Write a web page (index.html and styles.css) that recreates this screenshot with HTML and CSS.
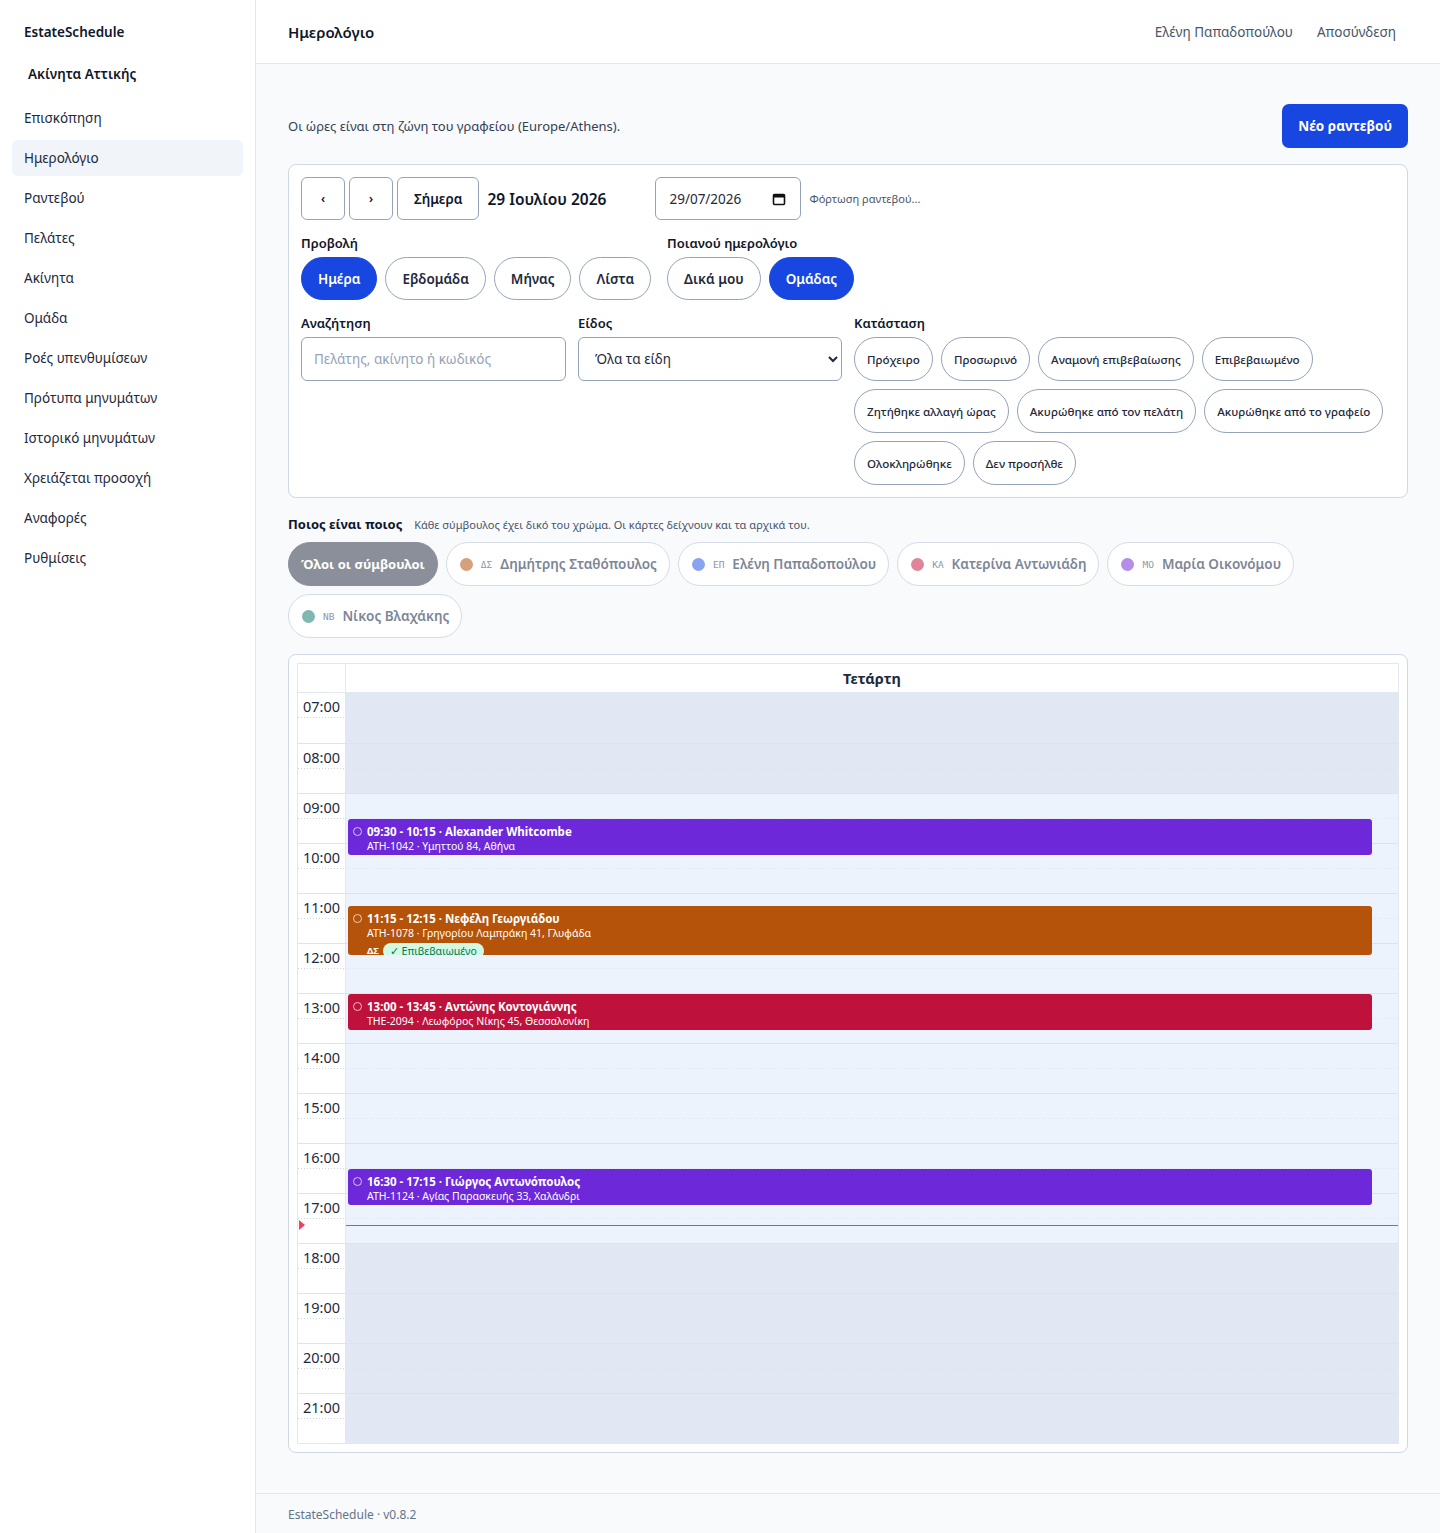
FILE: index.html
```html
<!DOCTYPE html>
<html lang="el">
<head>
  <meta charset="UTF-8">
  <meta name="viewport" content="width=device-width, initial-scale=1.0">
  <title>Ημερολόγιο · EstateSchedule</title>
  <link rel="stylesheet" href="styles.css">
</head>
<body>
  <aside class="sidebar">
    <div class="brand">EstateSchedule</div>
    <div class="agency">Ακίνητα Αττικής</div>
    <nav class="nav">
      <a class="nav-item">Επισκόπηση</a>
      <a class="nav-item active">Ημερολόγιο</a>
      <a class="nav-item">Ραντεβού</a>
      <a class="nav-item">Πελάτες</a>
      <a class="nav-item">Ακίνητα</a>
      <a class="nav-item">Ομάδα</a>
      <a class="nav-item">Ροές υπενθυμίσεων</a>
      <a class="nav-item">Πρότυπα μηνυμάτων</a>
      <a class="nav-item">Ιστορικό μηνυμάτων</a>
      <a class="nav-item">Χρειάζεται προσοχή</a>
      <a class="nav-item">Αναφορές</a>
      <a class="nav-item">Ρυθμίσεις</a>
    </nav>
  </aside>

  <div class="page">
    <header class="topbar">
      <h1 class="page-title">Ημερολόγιο</h1>
      <div class="user-links">
        <a>Ελένη Παπαδοπούλου</a>
        <a>Αποσύνδεση</a>
      </div>
    </header>

    <main class="main">
      <div class="intro">
        <p class="tz-note">Οι ώρες είναι στη ζώνη του γραφείου (Europe/Athens).</p>
        <button class="btn-primary">Νέο ραντεβού</button>
      </div>

      <section class="card filters">
        <div class="nav-row">
          <button class="btn-box arrow">‹</button>
          <button class="btn-box arrow">›</button>
          <button class="btn-box">Σήμερα</button>
          <span class="date-title">29 Ιουλίου 2026</span>
          <div class="date-input">
            <span>29/07/2026</span>
            <svg width="14" height="14" viewBox="0 0 14 14"><rect x="1.5" y="2.5" width="11" height="10" rx="1" fill="none" stroke="#111" stroke-width="1.6"/><rect x="1.5" y="2.5" width="11" height="3" fill="#111"/></svg>
          </div>
          <span class="loading">Φόρτωση ραντεβού...</span>
        </div>

        <div class="view-row">
          <div class="group">
            <div class="label">Προβολή</div>
            <div class="pills">
              <button class="pill active">Ημέρα</button>
              <button class="pill">Εβδομάδα</button>
              <button class="pill">Μήνας</button>
              <button class="pill">Λίστα</button>
            </div>
          </div>
          <div class="group">
            <div class="label">Ποιανού ημερολόγιο</div>
            <div class="pills">
              <button class="pill">Δικά μου</button>
              <button class="pill active">Ομάδας</button>
            </div>
          </div>
        </div>

        <div class="filter-grid">
          <div>
            <div class="label">Αναζήτηση</div>
            <input class="field" type="text" placeholder="Πελάτης, ακίνητο ή κωδικός">
          </div>
          <div>
            <div class="label">Είδος</div>
            <select class="field select">
              <option>Όλα τα είδη</option>
            </select>
          </div>
          <div>
            <div class="label">Κατάσταση</div>
            <div class="chips">
              <button class="chip">Πρόχειρο</button>
              <button class="chip">Προσωρινό</button>
              <button class="chip">Αναμονή επιβεβαίωσης</button>
              <button class="chip">Επιβεβαιωμένο</button>
              <button class="chip">Ζητήθηκε αλλαγή ώρας</button>
              <button class="chip">Ακυρώθηκε από τον πελάτη</button>
              <button class="chip">Ακυρώθηκε από το γραφείο</button>
              <button class="chip">Ολοκληρώθηκε</button>
              <button class="chip">Δεν προσήλθε</button>
            </div>
          </div>
        </div>
      </section>

      <section class="legend">
        <div class="legend-head">
          <strong>Ποιος είναι ποιος</strong>
          <span>Κάθε σύμβουλος έχει δικό του χρώμα. Οι κάρτες δείχνουν και τα αρχικά του.</span>
        </div>
        <div class="agents">
          <button class="agent all">Όλοι οι σύμβουλοι</button>
          <button class="agent"><i class="dot c-ds"></i><span class="ini">ΔΣ</span>Δημήτρης Σταθόπουλος</button>
          <button class="agent"><i class="dot c-ep"></i><span class="ini">ΕΠ</span>Ελένη Παπαδοπούλου</button>
          <button class="agent"><i class="dot c-ka"></i><span class="ini">ΚΑ</span>Κατερίνα Αντωνιάδη</button>
          <button class="agent"><i class="dot c-mo"></i><span class="ini">ΜΟ</span>Μαρία Οικονόμου</button>
          <button class="agent"><i class="dot c-nb"></i><span class="ini">ΝΒ</span>Νίκος Βλαχάκης</button>
        </div>
      </section>

      <section class="card calendar">
        <div class="cal">
          <div class="cal-head">
            <div class="corner"></div>
            <div class="day-name">Τετάρτη</div>
          </div>
          <div class="cal-body">
            <div class="hour off"><div class="time">07:00</div><div class="slot"></div></div>
            <div class="hour off"><div class="time">08:00</div><div class="slot"></div></div>
            <div class="hour"><div class="time">09:00</div><div class="slot"></div></div>
            <div class="hour"><div class="time">10:00</div><div class="slot"></div></div>
            <div class="hour"><div class="time">11:00</div><div class="slot"></div></div>
            <div class="hour"><div class="time">12:00</div><div class="slot"></div></div>
            <div class="hour"><div class="time">13:00</div><div class="slot"></div></div>
            <div class="hour"><div class="time">14:00</div><div class="slot"></div></div>
            <div class="hour"><div class="time">15:00</div><div class="slot"></div></div>
            <div class="hour"><div class="time">16:00</div><div class="slot"></div></div>
            <div class="hour"><div class="time">17:00</div><div class="slot"></div></div>
            <div class="hour off"><div class="time">18:00</div><div class="slot"></div></div>
            <div class="hour off"><div class="time">19:00</div><div class="slot"></div></div>
            <div class="hour off"><div class="time">20:00</div><div class="slot"></div></div>
            <div class="hour off"><div class="time">21:00</div><div class="slot"></div></div>

            <!-- events sit over the grid, top = (start - 07:00) * 50px -->
            <div class="events">
              <div class="event purple" style="top: 126px; height: 36px;">
                <div class="ev-title"><i class="ring"></i>09:30 - 10:15 · Alexander Whitcombe</div>
                <div class="ev-sub">ATH-1042 · Υμηττού 84, Αθήνα</div>
              </div>
              <div class="event orange" style="top: 213px; height: 49px;">
                <div class="ev-title"><i class="ring"></i>11:15 - 12:15 · Νεφέλη Γεωργιάδου</div>
                <div class="ev-sub">ATH-1078 · Γρηγορίου Λαμπράκη 41, Γλυφάδα</div>
                <div class="ev-meta"><b>ΔΣ</b><span class="badge">✓ Επιβεβαιωμένο</span></div>
              </div>
              <div class="event red" style="top: 301px; height: 36px;">
                <div class="ev-title"><i class="ring"></i>13:00 - 13:45 · Αντώνης Κοντογιάννης</div>
                <div class="ev-sub">THE-2094 · Λεωφόρος Νίκης 45, Θεσσαλονίκη</div>
              </div>
              <div class="event purple" style="top: 476px; height: 36px;">
                <div class="ev-title"><i class="ring"></i>16:30 - 17:15 · Γιώργος Αντωνόπουλος</div>
                <div class="ev-sub">ATH-1124 · Αγίας Παρασκευής 33, Χαλάνδρι</div>
              </div>
            </div>
            <div class="now" style="top: 532px;"><i class="now-arrow"></i><div class="now-line"></div></div>
          </div>
        </div>
      </section>
    </main>

    <footer class="footer">EstateSchedule · v0.8.2</footer>
  </div>
</body>
</html>
```

FILE: styles.css
```css
* {
  box-sizing: border-box;
}

body {
  margin: 0;
  font-family: "Noto Sans", "Open Sans", sans-serif;
  color: #0f172a;
  background-color: #f8fafc;
  display: flex;
  min-height: 100vh;
}

button, input, select {
  font-family: inherit;
}

/* sidebar */
.sidebar {
  width: 256px;
  flex-shrink: 0;
  background-color: #fff;
  border-right: 1px solid #e2e8f0;
  padding: 22px 12px;
}

.brand {
  font-size: 13.5px;
  font-weight: 600;
  padding: 0 12px;
  line-height: 20px;
}

.agency {
  font-size: 13.5px;
  font-weight: 600;
  padding: 0 16px;
  margin-top: 22px;
  line-height: 20px;
}

.nav {
  display: flex;
  flex-direction: column;
  gap: 4px;
  margin-top: 16px;
}

.nav-item {
  display: block;
  height: 36px;
  line-height: 36px;
  padding: 0 12px;
  font-size: 13.5px;
  color: #1e293b;
  border-radius: 6px;
}

.nav-item.active {
  background-color: #f1f5f9;
}

/* right side */
.page {
  flex: 1;
  display: flex;
  flex-direction: column;
  min-width: 0;
}

.topbar {
  height: 64px;
  background-color: #fff;
  border-bottom: 1px solid #e2e8f0;
  display: flex;
  align-items: center;
  justify-content: space-between;
  padding: 0 44px 0 32px;
}

.page-title {
  margin: 0;
  font-size: 15px;
  font-weight: 600;
}

.user-links {
  display: flex;
  gap: 24px;
  font-size: 13.5px;
  color: #475569;
}

.main {
  flex: 1;
  padding: 40px 32px 40px;
}

.intro {
  display: flex;
  align-items: center;
  justify-content: space-between;
}

.tz-note {
  margin: 0;
  font-size: 13px;
  color: #334155;
}

.btn-primary {
  height: 44px;
  padding: 0 16px;
  border: none;
  border-radius: 7px;
  background-color: #1746e0;
  color: #fff;
  font-size: 13.5px;
  font-weight: 700;
}

.card {
  background-color: #fff;
  border: 1px solid #cfd8e3;
  border-radius: 8px;
}

.filters {
  margin-top: 16px;
  padding: 12px 12px 12px;
}

.nav-row {
  display: flex;
  align-items: center;
  gap: 4px;
}

.btn-box {
  height: 43px;
  padding: 0 16px;
  background-color: #fff;
  border: 1px solid #94a3b8;
  border-radius: 6px;
  font-size: 13.5px;
  font-weight: 600;
  color: #0f172a;
}

.btn-box.arrow {
  width: 44px;
  padding: 0;
  font-size: 12px;
}

.date-title {
  font-size: 15.5px;
  font-weight: 600;
  margin-left: 4px;
  min-width: 164px;
}

.date-input {
  width: 146px;
  height: 43px;
  border: 1px solid #94a3b8;
  border-radius: 6px;
  display: flex;
  align-items: center;
  justify-content: space-between;
  padding: 0 14px 0 13px;
  font-size: 13.5px;
  color: #1e293b;
}

.loading {
  margin-left: 4px;
  font-size: 11px;
  color: #475569;
}

.view-row {
  display: flex;
  gap: 16px;
  margin-top: 15px;
}

.label {
  font-size: 13px;
  font-weight: 600;
  line-height: 16px;
  margin-bottom: 6px;
  color: #0f172a;
}

.pills {
  display: flex;
  gap: 8px;
}

.pill {
  height: 43px;
  padding: 0 16px;
  border: 1px solid #94a3b8;
  border-radius: 999px;
  background-color: #fff;
  font-size: 13.5px;
  font-weight: 600;
  color: #1e293b;
}

.pill.active {
  background-color: #1746e0;
  border-color: #1746e0;
  color: #fff;
}

.filter-grid {
  display: grid;
  grid-template-columns: 265px 264px 1fr;
  gap: 12px;
  margin-top: 15px;
}

.field {
  width: 100%;
  height: 44px;
  border: 1px solid #94a3b8;
  border-radius: 6px;
  background-color: #fff;
  padding: 0 12px;
  font-size: 13.5px;
  color: #1e293b;
}

.field::placeholder {
  color: #94a3b8;
}

.select {
  padding: 0 6px 0 12px;
}

.chips {
  display: flex;
  flex-wrap: wrap;
  gap: 8px;
}

.chip {
  height: 44px;
  padding: 0 12px;
  border: 1px solid #94a3b8;
  border-radius: 999px;
  background-color: #fff;
  font-size: 11.6px;
  font-weight: 500;
  color: #1e293b;
}

/* who is who */
.legend {
  margin-top: 17px;
}

.legend-head {
  display: flex;
  align-items: baseline;
  gap: 12px;
  line-height: 18px;
}

.legend-head strong {
  font-size: 13px;
}

.legend-head span {
  font-size: 11px;
  color: #475569;
}

.agents {
  display: flex;
  flex-wrap: wrap;
  gap: 8px;
  margin-top: 8px;
}

.agent {
  height: 44px;
  display: flex;
  align-items: center;
  gap: 8px;
  padding: 0 12px;
  border: 1px solid #d5dce6;
  border-radius: 999px;
  background-color: #fff;
  font-size: 13.5px;
  font-weight: 600;
  color: #7d8696;
}

.agent.all {
  background-color: #8b8f99;
  border-color: #8b8f99;
  color: #fff;
  font-size: 13px;
  font-weight: 700;
}

.dot {
  width: 13px;
  height: 13px;
  border-radius: 50%;
  margin-left: 1px;
}

.c-ds { background-color: #d5a07c; }
.c-ep { background-color: #8aa3ee; }
.c-ka { background-color: #df8499; }
.c-mo { background-color: #b48de8; }
.c-nb { background-color: #7fb8b1; }

.ini {
  font-family: "DejaVu Sans Mono", monospace;
  font-size: 9.5px;
  font-weight: 400;
  color: #8e97a6;
}

/* calendar */
.calendar {
  margin-top: 16px;
  padding: 8px;
}

.cal {
  border: 1px solid #e2e8f0;
}

.cal-head {
  display: grid;
  grid-template-columns: 48px 1fr;
  height: 29px;
  border-bottom: 1px solid #e2e8f0;
}

.corner {
  border-right: 1px solid #e2e8f0;
}

.day-name {
  text-align: center;
  font-size: 14.5px;
  font-weight: 700;
  line-height: 29px;
  color: #1e293b;
}

.cal-body {
  position: relative;
}

.hour {
  display: grid;
  grid-template-columns: 48px 1fr;
  height: 50px;
  border-top: 1px solid #dde3ec;
}

.hour:first-child {
  border-top: none;
}

.time {
  border-right: 1px solid #e2e8f0;
  font-size: 14.5px;
  color: #1e293b;
  padding: 3px 0 0 5px;
  background-image: linear-gradient(to right, #cbd5e1 50%, transparent 50%);
  background-size: 3px 1px;
  background-repeat: repeat-x;
  background-position: 0 24px;
}

.slot {
  background-color: #edf3fd;
  background-image: linear-gradient(to right, #dbe3ee 50%, transparent 50%);
  background-size: 3px 1px;
  background-repeat: repeat-x;
  background-position: 0 24px;
}

.hour.off .slot {
  background-color: #e1e7f3;
}

.events {
  position: absolute;
  top: 0;
  bottom: 0;
  left: 50px;
  right: 26px;
}

.event {
  position: absolute;
  left: 0;
  right: 0;
  border-radius: 3px;
  padding: 5px 6px 0 19px;
  color: #fff;
  overflow: hidden;
}

.event.purple { background-color: #6d28d9; }
.event.orange { background-color: #b45309; }
.event.red { background-color: #be123c; }

.ev-title {
  position: relative;
  font-size: 11.5px;
  font-weight: 700;
  line-height: 15px;
}

.ring {
  position: absolute;
  left: -14px;
  top: 3px;
  width: 9px;
  height: 9px;
  border: 1px solid rgba(255, 255, 255, 0.7);
  border-radius: 50%;
}

.ev-sub {
  font-size: 10.5px;
  line-height: 14px;
}

.ev-meta {
  display: flex;
  align-items: center;
  gap: 4px;
  font-size: 9.5px;
  line-height: 16px;
  margin-top: 3px;
}

.badge {
  background-color: #d1fae5;
  color: #047857;
  border-radius: 999px;
  padding: 0 7px;
  font-size: 10.5px;
}

.now {
  position: absolute;
  left: 0;
  right: 0;
  height: 0;
}

.now-line {
  position: absolute;
  left: 48px;
  right: 0;
  top: 0;
  height: 1px;
  background-color: #f43f5e;
}

.now-arrow {
  position: absolute;
  left: 1px;
  top: -5px;
  width: 0;
  height: 0;
  border-top: 5px solid transparent;
  border-bottom: 5px solid transparent;
  border-left: 6px solid #f43f5e;
}

.footer {
  height: 41px;
  border-top: 1px solid #e2e8f0;
  padding: 0 32px;
  display: flex;
  align-items: center;
  font-size: 12px;
  color: #64748b;
}
```
